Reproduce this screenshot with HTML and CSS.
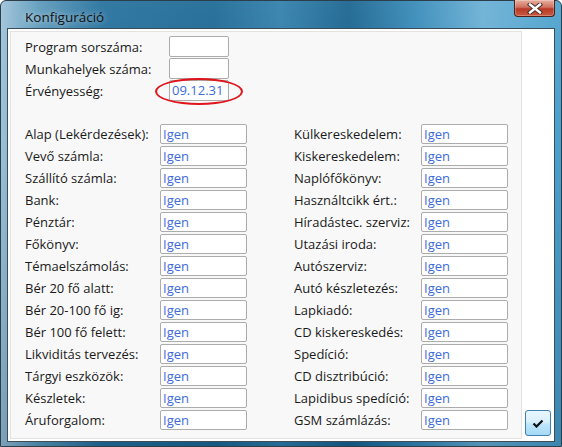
FILE: index.html
```html
<!DOCTYPE html>
<html lang="hu">
<head>
  <meta charset="UTF-8">
  <title>Konfiguráció</title>
  <link rel="stylesheet" href="styles.css">
</head>
<body>
<div class="window">
  <div class="titlebar">
    <span class="title">Konfiguráció</span>
    <div class="close-btn">
      <svg width="16" height="11" viewBox="0 0 16 11">
        <path d="M3 1.5 L13 9.5 M13 1.5 L3 9.5" stroke="#3a2a28" stroke-width="4.2" stroke-linecap="square"/>
        <path d="M3 1.5 L13 9.5 M13 1.5 L3 9.5" stroke="#ffffff" stroke-width="2.4" stroke-linecap="square"/>
      </svg>
    </div>
  </div>
  <div class="client">
    <div class="panel">
      <div class="top-rows">
        <div class="row top"><span class="label">Program sorszáma:</span><span class="box"></span></div>
        <div class="row top"><span class="label">Munkahelyek száma:</span><span class="box"></span></div>
        <div class="row top"><span class="label">Érvényesség:</span><span class="box date">09.12.31<span class="ring"></span></span></div>
      </div>
      <div class="modules">
        <div class="col left">
          <div class="row"><span class="label">Alap (Lekérdezések):</span><span class="box">Igen</span></div>
          <div class="row"><span class="label">Vevő számla:</span><span class="box">Igen</span></div>
          <div class="row"><span class="label">Szállító számla:</span><span class="box">Igen</span></div>
          <div class="row"><span class="label">Bank:</span><span class="box">Igen</span></div>
          <div class="row"><span class="label">Pénztár:</span><span class="box">Igen</span></div>
          <div class="row"><span class="label">Főkönyv:</span><span class="box">Igen</span></div>
          <div class="row"><span class="label">Témaelszámolás:</span><span class="box">Igen</span></div>
          <div class="row"><span class="label">Bér 20 fő alatt:</span><span class="box">Igen</span></div>
          <div class="row"><span class="label">Bér 20-100 fő ig:</span><span class="box">Igen</span></div>
          <div class="row"><span class="label">Bér 100 fő felett:</span><span class="box">Igen</span></div>
          <div class="row"><span class="label">Likviditás tervezés:</span><span class="box">Igen</span></div>
          <div class="row"><span class="label">Tárgyi eszközök:</span><span class="box">Igen</span></div>
          <div class="row"><span class="label">Készletek:</span><span class="box">Igen</span></div>
          <div class="row"><span class="label">Áruforgalom:</span><span class="box">Igen</span></div>
        </div>
        <div class="col right">
          <div class="row"><span class="label">Külkereskedelem:</span><span class="box">Igen</span></div>
          <div class="row"><span class="label">Kiskereskedelem:</span><span class="box">Igen</span></div>
          <div class="row"><span class="label">Naplófőkönyv:</span><span class="box">Igen</span></div>
          <div class="row"><span class="label">Használtcikk ért.:</span><span class="box">Igen</span></div>
          <div class="row"><span class="label">Híradástec. szerviz:</span><span class="box">Igen</span></div>
          <div class="row"><span class="label">Utazási iroda:</span><span class="box">Igen</span></div>
          <div class="row"><span class="label">Autószerviz:</span><span class="box">Igen</span></div>
          <div class="row"><span class="label">Autó készletezés:</span><span class="box">Igen</span></div>
          <div class="row"><span class="label">Lapkiadó:</span><span class="box">Igen</span></div>
          <div class="row"><span class="label">CD kiskereskedés:</span><span class="box">Igen</span></div>
          <div class="row"><span class="label">Spedíció:</span><span class="box">Igen</span></div>
          <div class="row"><span class="label">CD disztribúció:</span><span class="box">Igen</span></div>
          <div class="row"><span class="label">Lapidibus spedíció:</span><span class="box">Igen</span></div>
          <div class="row"><span class="label">GSM számlázás:</span><span class="box">Igen</span></div>
        </div>
      </div>
    </div>
    <div class="side">
      <button class="ok-btn">
        <svg width="12" height="9" viewBox="0 0 12 9">
          <path d="M1.5 4.5 L4.5 7.5 L10.5 1.5" fill="none" stroke="#111" stroke-width="2.2"/>
        </svg>
      </button>
    </div>
  </div>
</div>
</body>
</html>
```

FILE: styles.css
```css
body {
  margin: 0;
  font-family: "Open Sans", "Noto Sans", sans-serif;
  font-size: 13px;
  color: #1a1a1a;
}
.window {
  width: 562px;
  height: 447px;
  box-sizing: border-box;
  border: 1px solid #2c3e4a;
  border-radius: 6px 6px 0 0;
  background:
    linear-gradient(180deg, rgba(255,255,255,0.08) 0%, rgba(0,0,0,0) 30%, rgba(0,30,60,0.2) 100%),
    linear-gradient(90deg, #9cc2d8 0%, #5a98ba 7%, #236f9c 18%, #1b6894 38%, #2f7eab 50%, #17628e 62%, #3589b8 74%, #69afd4 86%, #4aa0cc 100%);
  display: flex;
  flex-direction: column;
}
.titlebar {
  height: 27px;
  position: relative;
  display: flex;
  align-items: center;
}
.title {
  margin-left: 24px;
  margin-top: 4px;
  font-size: 13.5px;
  color: #111;
  text-shadow: 0 0 6px rgba(255,255,255,0.7);
}
.close-btn {
  position: absolute;
  right: 6px;
  top: -1px;
  width: 41px;
  height: 17px;
  box-sizing: border-box;
  border: 1px solid #4a2018;
  border-top: none;
  border-radius: 0 0 4px 4px;
  background: linear-gradient(180deg, #e8b0a0 0%, #d07060 45%, #b83a28 55%, #c85a40 100%);
  display: flex;
  align-items: center;
  justify-content: center;
  box-shadow: inset 0 0 0 1px rgba(255,255,255,0.25);
}
.client {
  flex: 1;
  margin: 0 6px 4px 6px;
  border: 1px solid #3b4d58;
  background: #fff;
  display: flex;
}
.panel {
  width: 512px;
  margin: 2px 0 2px 2px;
  border: 1px solid #e2e2e2;
  background: #f8f8f8;
  padding: 4px 0 0 14px;
  box-sizing: border-box;
}
.top-rows {
  display: flex;
  flex-direction: column;
  gap: 1px;
}
.row {
  display: flex;
  align-items: center;
  height: 20px;
}
.row.top {
  height: 21px;
}
.label {
  flex: none;
}
.top .label {
  width: 144px;
}
.top .box {
  width: 60px;
}
.box {
  position: relative;
  height: 100%;
  box-sizing: border-box;
  width: 87px;
  border: 1px solid #acacac;
  border-radius: 2px;
  background: #fff;
  color: #3d6bdc;
  padding-left: 2px;
  line-height: 18px;
}
.date {
  line-height: 19px;
}
.ring {
  position: absolute;
  left: -15px;
  top: -3px;
  width: 88px;
  height: 27px;
  box-sizing: border-box;
  border: 2.5px solid #e0141c;
  border-radius: 50%;
}
.modules {
  display: flex;
  margin-top: 23px;
  gap: 47px;
}
.col {
  display: flex;
  flex-direction: column;
  gap: 2px;
}
.left .label {
  width: 135px;
}
.right .label {
  width: 127px;
}
.side {
  flex: 1;
  display: flex;
  align-items: flex-end;
  justify-content: center;
  padding-bottom: 5px;
}
.ok-btn {
  width: 26px;
  height: 26px;
  padding: 0;
  border: 1px solid #3c7fb1;
  border-radius: 3px;
  background: linear-gradient(180deg, #eaf6fd 0%, #d9f0fc 45%, #bee6fd 55%, #a7d9f5 100%);
  display: flex;
  align-items: center;
  justify-content: center;
}
```
